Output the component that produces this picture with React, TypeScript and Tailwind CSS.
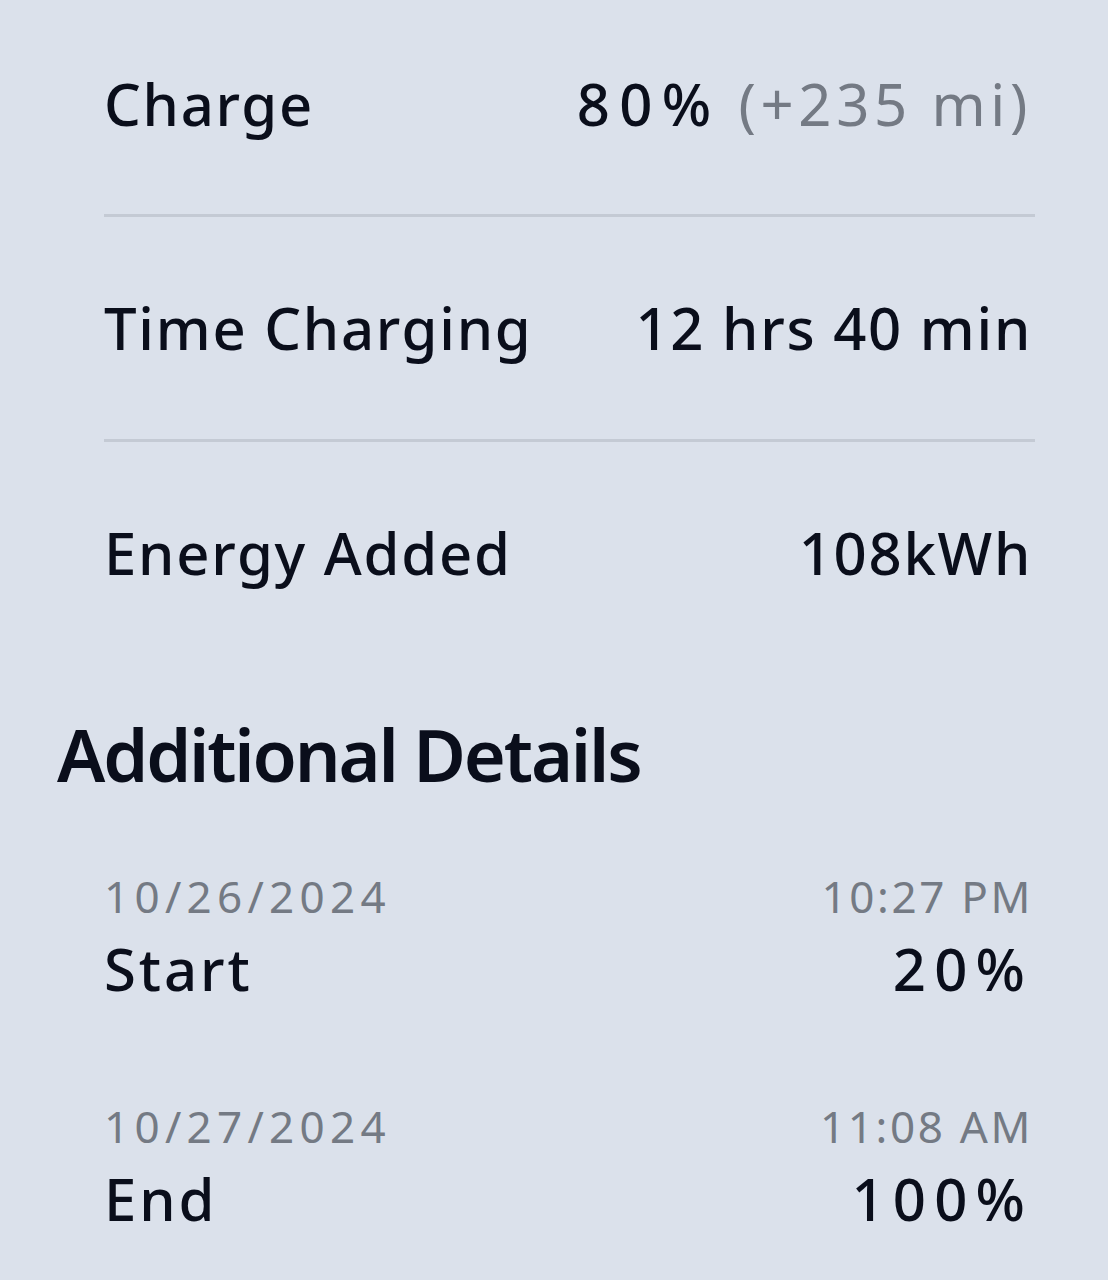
import React from 'react';

type Stat = { label: string; value: string; extra?: string };
type Detail = { date: string; time: string; label: string; value: string };

const stats: Stat[] = [
  { label: 'Charge', value: '80%', extra: '(+235 mi)' },
  { label: 'Time Charging', value: '12 hrs 40 min' },
  { label: 'Energy Added', value: '108kWh' },
];

const details: Detail[] = [
  { date: '10/26/2024', time: '10:27 PM', label: 'Start', value: '20%' },
  { date: '10/27/2024', time: '11:08 AM', label: 'End', value: '100%' },
];

export default function App() {
  return (
    <div className="w-[1108px] h-[1280px] overflow-hidden bg-[#dbe1eb] text-[#0a0e1b] font-['Noto_Sans',sans-serif]">
      {/* Stats */}
      <div className="pl-[104px] pr-[76px]">
        {stats.map((s, i) => (
          <div key={s.label}>
            <div
              className={`flex items-center justify-between ${
                i === 0 ? 'h-[214px] pb-[6px]' : 'h-[222px]'
              }`}
            >
              <span className="text-[58px] font-medium tracking-[0.03em] leading-none">
                {s.label}
              </span>
              {s.extra ? (
                <span className="text-[58px] font-medium leading-none flex items-baseline gap-[18px]">
                  <span className="tracking-[0.16em]">{s.value}</span>
                  <span className="text-[#747a84] font-normal tracking-[0.08em]">{s.extra}</span>
                </span>
              ) : (
                <span className="text-[58px] font-medium tracking-[0.03em] leading-none">
                  {s.value}
                </span>
              )}
            </div>
            {i < stats.length - 1 && <div className="h-[3px] bg-[#c4cad4] -mr-[3px]" />}
          </div>
        ))}
      </div>

      {/* Additional Details */}
      <h2 className="mt-[54px] pl-[57px] text-[72px] font-semibold leading-none tracking-[-0.03em]">
        Additional Details
      </h2>

      <div className="pl-[104px] pr-[75px] mt-[84px] flex flex-col gap-[106px]">
        {details.map((d) => (
          <div key={d.label} className="flex flex-col gap-[22px]">
            <div className="flex justify-between text-[44px] leading-none text-[#747a84]">
              <span className="tracking-[0.12em]">{d.date}</span>
              <span className="tracking-[0.06em]">{d.time}</span>
            </div>
            <div className="flex justify-between text-[58px] font-medium leading-none">
              <span className="tracking-[0.05em]">{d.label}</span>
              <span className="tracking-[0.14em]">{d.value}</span>
            </div>
          </div>
        ))}
      </div>
    </div>
  );
}
